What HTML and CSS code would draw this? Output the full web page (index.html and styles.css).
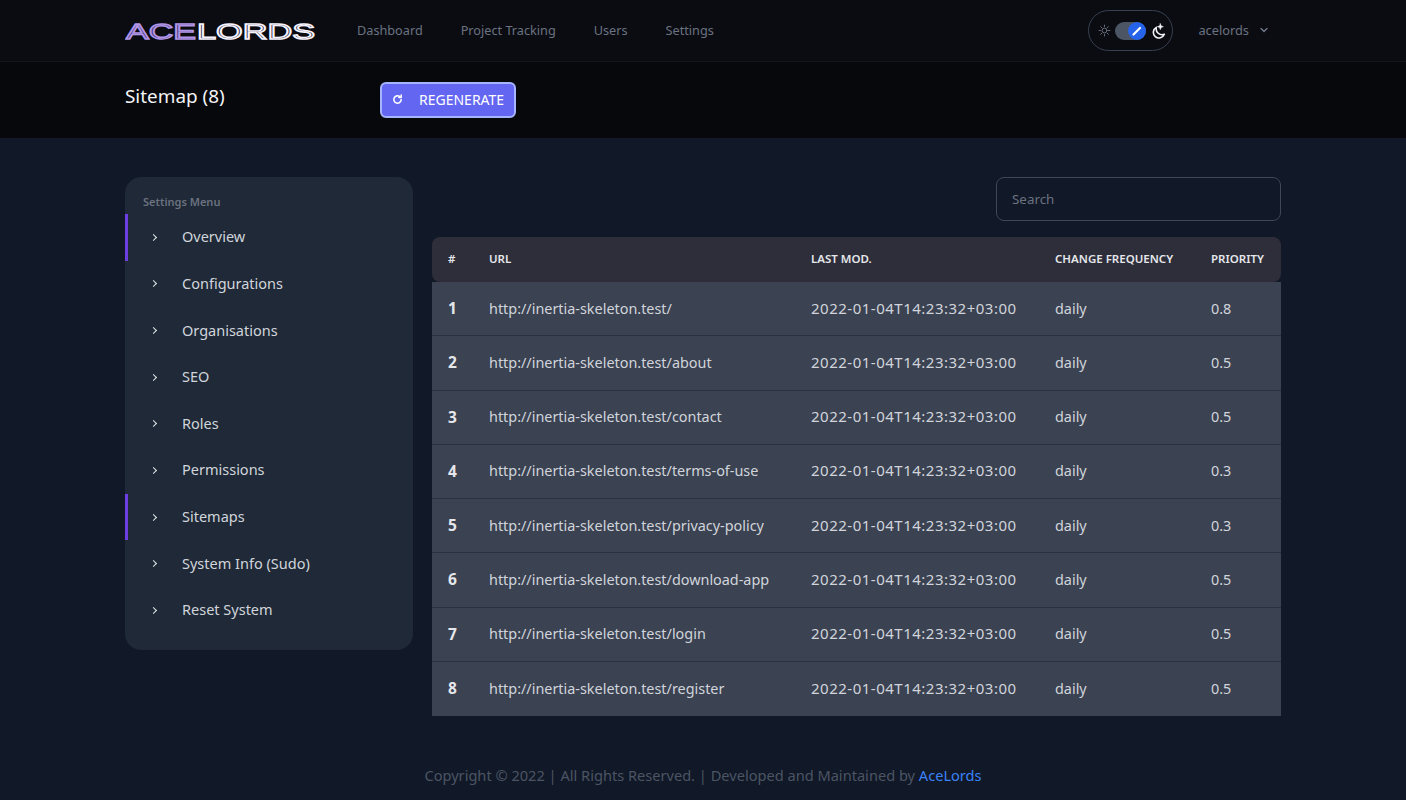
FILE: index.html
```html
<!DOCTYPE html>
<html lang="en">
<head>
  <meta charset="UTF-8" />
  <title>Sitemap (8)</title>
  <link rel="stylesheet" href="styles.css">
</head>
<body>

  <!-- Top nav -->
  <header class="topbar">
    <div class="wrap topbar-inner">
      <svg class="logo" width="193" height="30" viewBox="0 0 193 30" role="img" aria-label="AceLords">
        <text class="logo-ace" x="1" y="22.500" textLength="70" lengthAdjust="spacingAndGlyphs">ACE</text>
        <text class="logo-lords" x="72" y="22.500" textLength="118" lengthAdjust="spacingAndGlyphs">LORDS</text>
      </svg>
      <nav class="nav">
        <a href="#">Dashboard</a>
        <a href="#">Project Tracking</a>
        <a href="#">Users</a>
        <a href="#">Settings</a>
      </nav>
      <div class="topbar-right">
        <div class="theme-toggle">
          <svg class="icon-sun" width="13" height="13" viewBox="0 0 24 24" fill="none" stroke="currentColor" stroke-width="1.800" stroke-linecap="round">
            <circle cx="12" cy="12" r="4.500" />
            <path d="M12 2v2.500M12 19.500V22M2 12h2.500M19.500 12H22M5 5l1.800 1.800M17.200 17.200L19 19M5 19l1.800-1.800M17.200 6.800L19 5" />
          </svg>
          <div class="switch">
            <div class="switch-knob">
              <svg width="12" height="12" viewBox="0 0 12 12"><path d="M2.500 9.500L9 3" stroke="#fff" stroke-width="2.200" stroke-linecap="round" /></svg>
            </div>
          </div>
          <svg class="icon-moon" width="16" height="16" viewBox="0 0 24 24" fill="none" stroke="currentColor" stroke-width="2.400" stroke-linecap="round" stroke-linejoin="round">
            <path d="M9.500 6.500a8.500 8.500 0 1 0 12 10.500 9 9 0 0 1-12-10.500z" />
            <path d="M15.500 1l1.200 3.300L20 5.500l-3.300 1.200L15.500 10l-1.200-3.300L11 5.500l3.300-1.200z" fill="currentColor" stroke-width="0.800" />
          </svg>
        </div>
        <div class="user-menu">
          <span>acelords</span>
          <svg width="12" height="12" viewBox="0 0 24 24" fill="none" stroke="currentColor" stroke-width="3" stroke-linecap="round" stroke-linejoin="round"><path d="M6 9l6 6 6-6" /></svg>
        </div>
      </div>
    </div>
  </header>

  <!-- Page heading -->
  <section class="page-head">
    <div class="wrap page-head-inner">
      <h1>Sitemap (8)</h1>
      <button class="btn-regenerate">
        <svg width="11" height="11" viewBox="0 0 24 24" fill="none" stroke="currentColor" stroke-width="3.400" stroke-linecap="round" stroke-linejoin="round">
          <path d="M20 12a8 8 0 1 1-2.500-5.800" />
          <path d="M20 2.500v5h-5" />
        </svg>
        REGENERATE
      </button>
    </div>
  </section>

  <main class="wrap content">
    <aside class="side-menu">
      <div class="side-title">Settings Menu</div>
      <a class="side-item active" href="#"><span class="chev"></span>Overview</a>
      <a class="side-item" href="#"><span class="chev"></span>Configurations</a>
      <a class="side-item" href="#"><span class="chev"></span>Organisations</a>
      <a class="side-item" href="#"><span class="chev"></span>SEO</a>
      <a class="side-item" href="#"><span class="chev"></span>Roles</a>
      <a class="side-item" href="#"><span class="chev"></span>Permissions</a>
      <a class="side-item active" href="#"><span class="chev"></span>Sitemaps</a>
      <a class="side-item" href="#"><span class="chev"></span>System Info (Sudo)</a>
      <a class="side-item" href="#"><span class="chev"></span>Reset System</a>
    </aside>

    <div class="table-col">
      <div class="search-row">
        <input class="search" type="text" placeholder="Search" />
      </div>
      <table class="sitemap">
        <colgroup>
          <col class="c-num"><col class="c-url"><col class="c-mod"><col class="c-freq"><col class="c-pri">
        </colgroup>
        <thead>
          <tr><th>#</th><th>URL</th><th>LAST MOD.</th><th>CHANGE FREQUENCY</th><th>PRIORITY</th></tr>
        </thead>
        <tbody>
          <tr><td class="num">1</td><td>http://inertia-skeleton.test/</td><td class="mod">2022-01-04T14:23:32+03:00</td><td>daily</td><td>0.8</td></tr>
          <tr><td class="num">2</td><td>http://inertia-skeleton.test/about</td><td class="mod">2022-01-04T14:23:32+03:00</td><td>daily</td><td>0.5</td></tr>
          <tr><td class="num">3</td><td>http://inertia-skeleton.test/contact</td><td class="mod">2022-01-04T14:23:32+03:00</td><td>daily</td><td>0.5</td></tr>
          <tr><td class="num">4</td><td>http://inertia-skeleton.test/terms-of-use</td><td class="mod">2022-01-04T14:23:32+03:00</td><td>daily</td><td>0.3</td></tr>
          <tr><td class="num">5</td><td>http://inertia-skeleton.test/privacy-policy</td><td class="mod">2022-01-04T14:23:32+03:00</td><td>daily</td><td>0.3</td></tr>
          <tr><td class="num">6</td><td>http://inertia-skeleton.test/download-app</td><td class="mod">2022-01-04T14:23:32+03:00</td><td>daily</td><td>0.5</td></tr>
          <tr><td class="num">7</td><td>http://inertia-skeleton.test/login</td><td class="mod">2022-01-04T14:23:32+03:00</td><td>daily</td><td>0.5</td></tr>
          <tr><td class="num">8</td><td>http://inertia-skeleton.test/register</td><td class="mod">2022-01-04T14:23:32+03:00</td><td>daily</td><td>0.5</td></tr>
        </tbody>
      </table>
    </div>
  </main>

  <footer class="footer">
    Copyright © 2022 | All Rights Reserved. | Developed and Maintained by <a href="#">AceLords</a>
  </footer>

</body>
</html>
```

FILE: styles.css
```css
html, body {
  height: 800px;
  overflow: hidden;
}

body {
  margin: 0;
  font-family: "Noto Sans", "Open Sans", sans-serif;
  font-size: 15px;
  color: #d1d5db;
  background: #111827;
}

a {
  text-decoration: none;
  color: inherit;
}

.wrap {
  width: 1156px;
  margin: 0 auto;
}

/* Top nav */
.topbar {
  height: 61px;
  background: #0a0c12;
  border-bottom: 1px solid #111620;
}

.topbar-inner {
  height: 100%;
  display: flex;
  align-items: center;
}

.logo {
  margin-right: 39px;
}

.logo text {
  font-family: "Liberation Sans", sans-serif;
  font-size: 22.500px;
  stroke-width: 1.400px;
}

.logo-ace {
  fill: #3d3166;
  stroke: #b094e6;
}

.logo-lords {
  fill: #2a2738;
  stroke: #f7f3ff;
}

.nav {
  display: flex;
  gap: 38px;
  font-size: 12.700px;
  color: #6b7280;
  margin-top: -1px;
}

.topbar-right {
  margin-left: auto;
  display: flex;
  align-items: center;
  gap: 25px;
  margin-right: 11px;
}

.theme-toggle {
  width: 85px;
  height: 41px;
  box-sizing: border-box;
  border: 1px solid #374151;
  border-radius: 21px;
  padding-left: 2px;
  display: flex;
  align-items: center;
  justify-content: center;
  gap: 4px;
}

.icon-sun {
  color: #6b7280;
}

.icon-moon {
  color: #f3f4f6;
}

.switch {
  width: 31px;
  height: 18px;
  border-radius: 9px;
  background: #4b5563;
  display: flex;
  justify-content: flex-end;
}

.switch-knob {
  width: 18px;
  height: 18px;
  border-radius: 50%;
  background: #2563eb;
  display: flex;
  align-items: center;
  justify-content: center;
}

.user-menu {
  display: flex;
  align-items: center;
  gap: 9px;
  font-size: 12.800px;
  color: #6b7280;
  margin-top: -1px;
}

/* Page heading */
.page-head {
  height: 76px;
  background: #07080c;
}

.page-head-inner {
  height: 100%;
  display: flex;
  align-items: flex-start;
}

.page-head h1 {
  width: 255px;
  margin: 20px 0 0;
  font-size: 18.900px;
  line-height: 28px;
  font-weight: 400;
  color: #f3f4f6;
}

.btn-regenerate {
  margin-top: 20px;
  width: 136px;
  height: 36px;
  padding: 0 0 1px 10px;
  display: flex;
  align-items: center;
  gap: 16px;
  background: #6366f1;
  border: 2px solid #a5b4fc;
  border-radius: 6px;
  color: #fff;
  font-family: inherit;
  font-size: 14px;
  font-weight: 400;
}

/* Main */
.content {
  display: flex;
  align-items: flex-start;
  gap: 19px;
  padding-top: 39px;
}

.side-menu {
  width: 288px;
  height: 473px;
  box-sizing: border-box;
  padding-top: 17px;
  background: #1f2937;
  border-radius: 16px;
}

.side-title {
  padding-left: 18px;
  height: 20px;
  line-height: 15px;
  font-size: 11px;
  font-weight: 600;
  color: #6b7280;
}

.side-item {
  height: 46.630px;
  box-sizing: border-box;
  display: flex;
  align-items: center;
  border-left: 3px solid #0000;
  padding: 0 0 2px 23px;
  font-size: 14.500px;
  color: #d1d5db;
}

.side-item.active {
  border-left-color: #6d3ee0;
}

.chev {
  width: 5px;
  height: 5px;
  box-sizing: border-box;
  border-top: 1.600px solid #e5e7eb;
  border-right: 1.600px solid #e5e7eb;
  transform: rotate(45deg);
  margin: 2px 26px 0 0;
}

.table-col {
  flex: 1;
}

.search-row {
  display: flex;
  justify-content: flex-end;
  margin-bottom: 16px;
}

.search {
  width: 285px;
  height: 44px;
  box-sizing: border-box;
  padding: 0 15px;
  background: transparent;
  border: 1px solid #3d4756;
  border-radius: 8px;
  font-family: inherit;
  font-size: 13.400px;
  color: #d1d5db;
}

.search::placeholder {
  color: #6b7280;
}

.sitemap {
  width: 849px;
  table-layout: fixed;
  border-collapse: separate;
  border-spacing: 0;
}

.c-num { width: 41px; }
.c-url { width: 322px; }
.c-mod { width: 244px; }
.c-freq { width: 156px; }
.c-pri { width: 86px; }

.sitemap th {
  height: 45px;
  padding: 0 0 2px 16px;
  box-sizing: border-box;
  background: #2d2e39;
  text-align: left;
  font-size: 11.500px;
  font-weight: 600;
  color: #e5e7eb;
  white-space: nowrap;
}

.sitemap th:first-child {
  border-top-left-radius: 8px;
  border-bottom-left-radius: 8px;
}

.sitemap th:last-child {
  border-top-right-radius: 8px;
  border-bottom-right-radius: 8px;
}

.sitemap td {
  height: 54.250px;
  box-sizing: border-box;
  padding: 0 0 1px 16px;
  background: #3b4252;
  border-bottom: 1px solid #2a3140;
  font-size: 14.400px;
  color: #d1d5db;
  white-space: nowrap;
}

.sitemap tr:last-child td {
  border-bottom: 0;
}

.sitemap td.num {
  font-size: 15.500px;
  font-weight: 700;
  color: #e5e7eb;
}

.sitemap td.mod {
  font-size: 15px;
  letter-spacing: 0.500px;
  padding-bottom: 2px;
}

.footer {
  margin-top: 49px;
  text-align: center;
  line-height: 20px;
  font-size: 14.600px;
  color: #4b5563;
}

.footer a {
  color: #3b82f6;
}
```
